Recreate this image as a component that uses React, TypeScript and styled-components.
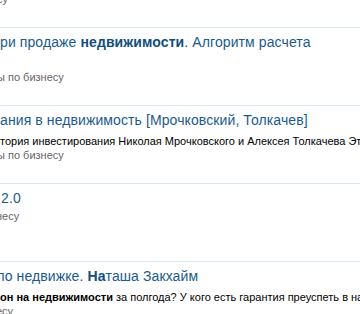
import React from 'react';
import styled, { createGlobalStyle } from 'styled-components';

const GlobalStyle = createGlobalStyle`
    html, body {
        margin: 0;
        padding: 0;
        background: #ffffff;
        overflow: hidden;
    }
    body {
        font-family: "Liberation Sans", Arial, sans-serif;
    }
`;

// the window shows a slice of a wider, scrolled result list:
// lines start cut at the left edge, $cut says how far the first glyph is hidden
const ResultList = styled.ul`
    list-style: none;
    margin: -51px 0 0 0;
    padding: 0;
    width: 760px;
`;

const ResultItem = styled.li`
    box-sizing: border-box;
    height: 78px;
    padding-top: 5px;
    border-top: 1px solid #d9e8f3;
    &:first-child {
        border-top-color: transparent;
    }
`;

const Title = styled.a<{ $cut?: number }>`
    display: block;
    font-size: 14px;
    line-height: 18px;
    letter-spacing: 0.1px;
    color: #1a5b8e;
    text-decoration: none;
    white-space: nowrap;
    text-indent: ${(p) => -(p.$cut ?? 0)}px;
    b {
        color: #104e7f;
    }
`;

const Snippet = styled.div<{ $cut?: number }>`
    margin-top: 5px;
    font-size: 11px;
    line-height: 14px;
    color: #000000;
    white-space: nowrap;
    text-indent: ${(p) => -(p.$cut ?? 0)}px;
`;

const Source = styled.div<{ $cut?: number; $tight?: boolean }>`
    margin-top: ${(p) => (p.$tight ? '2px' : '0')};
    font-size: 11px;
    line-height: 14px;
    color: #666666;
    white-space: nowrap;
    text-indent: ${(p) => -(p.$cut ?? 0)}px;
`;

interface Line {
    text: React.ReactNode;
    cut?: number;
}

interface Result {
    id: number;
    title: Line;
    snippet?: Line;
    source: Line;
}

const results: Result[] = [
    {
        id: 1,
        title: { text: '' },
        snippet: { text: '' },
        source: { text: 'су', cut: 3 },
    },
    {
        id: 2,
        title: {
            text: (
                <>
                    ри продаже <b>недвижимости</b>. Алгоритм расчета
                </>
            ),
        },
        snippet: { text: '' },
        source: { text: 'ы по бизнесу', cut: 3 },
    },
    {
        id: 3,
        title: { text: 'ания в недвижимость [Мрочковский, Толкачев]' },
        snippet: {
            text: 'тория инвестирования Николая Мрочковского и Алексея Толкачева Эта книга о том, как начать',
        },
        source: { text: 'ы по бизнесу', cut: 3 },
    },
    {
        id: 4,
        title: { text: '2.0', cut: -1 },
        source: { text: 'несу', cut: 4 },
    },
    {
        id: 5,
        title: {
            text: (
                <>
                    по недвижке. <b>На</b>таша Закхайм
                </>
            ),
            cut: 3,
        },
        snippet: {
            text: (
                <>
                    <b>он на недвижимости</b> за полгода? У кого есть гарантия преуспеть в нашем деле
                </>
            ),
        },
        source: { text: 'есу', cut: 4 },
    },
];

export default function App() {
    return (
        <React.Fragment>
            <GlobalStyle />
            <ResultList>
                {results.map((result) => (
                    <ResultItem key={result.id}>
                        <Title href="#" $cut={result.title.cut}>
                            {result.title.text || '\u00a0'}
                        </Title>
                        {result.snippet && (
                            <Snippet $cut={result.snippet.cut}>
                                {result.snippet.text || '\u00a0'}
                            </Snippet>
                        )}
                        <Source $cut={result.source.cut} $tight={!result.snippet}>
                            {result.source.text}
                        </Source>
                    </ResultItem>
                ))}
            </ResultList>
        </React.Fragment>
    );
}
